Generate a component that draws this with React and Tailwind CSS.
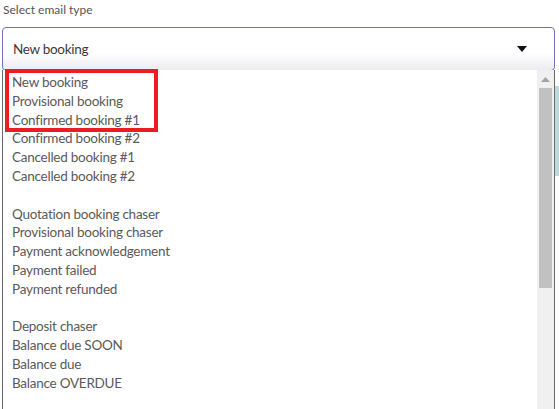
const groups = [
  ['New booking', 'Provisional booking', 'Confirmed booking #1', 'Confirmed booking #2', 'Cancelled booking #1', 'Cancelled booking #2'],
  ['Quotation booking chaser', 'Provisional booking chaser', 'Payment acknowledgement', 'Payment failed', 'Payment refunded'],
  ['Deposit chaser', 'Balance due SOON', 'Balance due', 'Balance OVERDUE'],
];

export default function App() {
  return (
    <div
      className="relative w-[559px] h-[409px] overflow-hidden bg-white text-[#4a4a4a]"
      style={{ fontFamily: 'Lato, "Open Sans", sans-serif' }}
    >
      {/* label */}
      <div className="pl-[3px] pt-[2px] h-[27px] text-[12px] leading-[16px] text-[#555]">Select email type</div>

      {/* select box */}
      <div className="ml-[2px] mr-[4px] h-[44px] rounded-[4px] border border-[#7b6cc0] bg-gradient-to-b from-white from-60% to-[#ececf0] flex items-center justify-between pl-[10px] pr-[27px]">
        <span className="text-[13.5px] tracking-[-0.3px] text-[#3a3a3a]">New booking</span>
        <svg width="10" height="6" viewBox="0 0 10 6">
          <polygon points="0,0 10,0 5,6" fill="#111" />
        </svg>
      </div>

      {/* dropdown + page edge */}
      <div className="flex h-[340px] -mt-[1px]">
        <div className="ml-[2px] flex-1 flex border-l border-r border-[#6a6a6a] bg-white">
          <div className="flex-1 pl-[9px] pt-[3px] text-[13.5px] tracking-[-0.25px] leading-[18.8px] text-[#5a5a5a]">
            {groups.map((g, gi) => (
              <div key={gi} className={gi > 0 ? 'mt-[18.8px]' : ''}>
                {g.map((item) => (
                  <div key={item}>{item}</div>
                ))}
              </div>
            ))}
          </div>
          {/* scrollbar */}
          <div className="w-[17px] bg-[#f0f0f0] flex flex-col items-center">
            <div className="h-[18px] flex items-center justify-center">
              <svg width="9" height="5" viewBox="0 0 9 5">
                <polygon points="0,5 9,5 4.5,0" fill="#a3a3a3" />
              </svg>
            </div>
            <div className="w-[13px] h-[200px] bg-[#c1c1c1]" />
          </div>
        </div>
        <div className="w-[4px] flex flex-col">
          <div className="h-[16px]" />
          <div className="h-[90px] bg-[#bcd9dc]" />
        </div>
      </div>

      {/* red annotation box */}
      <div className="absolute left-[5px] top-[69px] w-[153px] h-[63px] border-[4px] border-[#ed1c24]" />
    </div>
  );
}
